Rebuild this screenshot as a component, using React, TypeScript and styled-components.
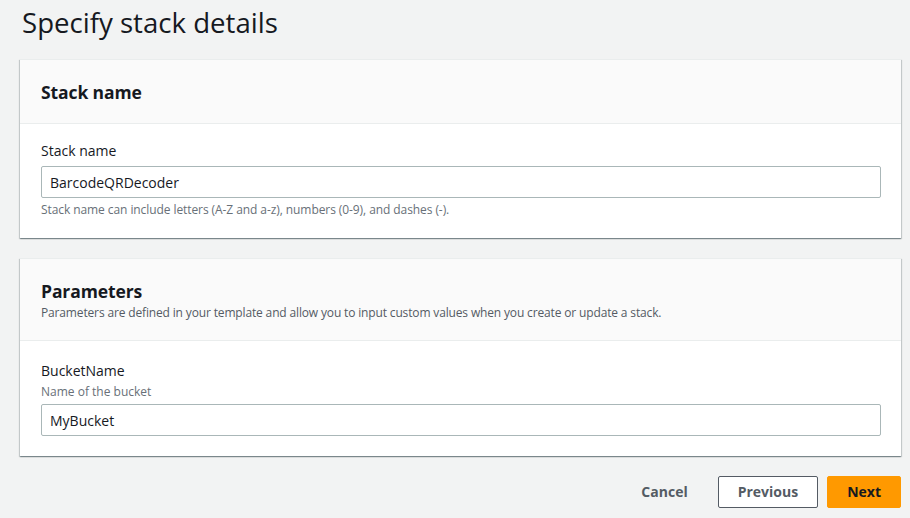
import React from "react";
import styled, { createGlobalStyle } from "styled-components";

const Global = createGlobalStyle`
  html, body { margin: 0; padding: 0; background: #f2f3f3; }
  body { font-family: "Open Sans", "Noto Sans", sans-serif; color: #16191f; }
  * { box-sizing: border-box; }
`;

const Page = styled.div`
  padding: 0 9px 0 20px;
  display: flex;
  flex-direction: column;
`;

const Title = styled.h1`
  margin: 0;
  padding: 2px 0 0 2px;
  height: 59px;
  font-size: 27.6px;
  font-weight: 400;
  line-height: 40px;
  color: #16191f;
`;

const Card = styled.section`
  background: #fff;
  border-top: 1px solid #eaeded;
  box-shadow: 0 1px 1px 0 rgba(0, 28, 36, 0.3), 1px 1px 1px 0 rgba(0, 28, 36, 0.15),
    -1px 1px 1px 0 rgba(0, 28, 36, 0.15);
  margin-bottom: 20px;
`;

const CardHeader = styled.header`
  background: #fafafa;
  border-bottom: 1px solid #eaeded;
  padding: 20px 20px 19px 21px;
`;

const CardTitle = styled.h2`
  margin: 0;
  font-size: 17.5px;
  font-weight: 700;
  line-height: 24px;
  letter-spacing: -0.1px;
`;

const CardDescription = styled.p`
  margin: 2px 0 0;
  font-size: 12px;
  line-height: 16px;
  letter-spacing: -0.15px;
  color: #545b64;
`;

const CardBody = styled.div<{ $top: number }>`
  padding: ${(p) => p.$top}px 20px 20px 21px;
`;

const Label = styled.label`
  display: block;
  font-size: 14px;
  line-height: 22px;
  color: #16191f;
`;

const SubLabel = styled.div`
  font-size: 12px;
  line-height: 16px;
  color: #687078;
  margin-top: 2px;
`;

const Input = styled.input`
  display: block;
  width: 100%;
  height: 32px;
  margin-top: 4px;
  padding: 4px 8px;
  border: 1px solid #aab7b8;
  border-radius: 2px;
  font-family: inherit;
  font-size: 14px;
  color: #16191f;
  background: #fff;
  outline: none;
`;

const Hint = styled.div`
  margin-top: 4px;
  font-size: 12px;
  line-height: 16px;
  letter-spacing: -0.08px;
  color: #687078;
`;

const Actions = styled.div`
  display: flex;
  justify-content: flex-end;
  align-items: center;
  gap: 9px;
`;

const Button = styled.button<{ $variant: "link" | "normal" | "primary" }>`
  height: 32px;
  padding: 0 ${(p) => (p.$variant === "link" ? "20px" : "19px")};
  border-radius: 2px;
  font-family: inherit;
  font-size: 14px;
  font-weight: 700;
  line-height: 22px;
  cursor: pointer;
  border: 1px solid
    ${(p) => (p.$variant === "normal" ? "#545b64" : p.$variant === "primary" ? "#f90" : "transparent")};
  background: ${(p) => (p.$variant === "primary" ? "#f90" : p.$variant === "normal" ? "#fff" : "transparent")};
  color: ${(p) => (p.$variant === "primary" ? "#16191f" : "#545b64")};
`;

export default function App() {
  return (
    <>
      <Global />
      <Page>
        <Title>Specify stack details</Title>
        <Card>
          <CardHeader>
            <CardTitle>Stack name</CardTitle>
          </CardHeader>
          <CardBody $top={16}>
            <Label>Stack name</Label>
            <Input defaultValue="BarcodeQRDecoder" />
            <Hint>Stack name can include letters (A-Z and a-z), numbers (0-9), and dashes (-).</Hint>
          </CardBody>
        </Card>
        <Card>
          <CardHeader>
            <CardTitle>Parameters</CardTitle>
            <CardDescription>
              Parameters are defined in your template and allow you to input custom values when you create or update a
              stack.
            </CardDescription>
          </CardHeader>
          <CardBody $top={19}>
            <Label>BucketName</Label>
            <SubLabel>Name of the bucket</SubLabel>
            <Input defaultValue="MyBucket" />
          </CardBody>
        </Card>
        <Actions>
          <Button $variant="link">Cancel</Button>
          <Button $variant="normal">Previous</Button>
          <Button $variant="primary">Next</Button>
        </Actions>
      </Page>
    </>
  );
}
